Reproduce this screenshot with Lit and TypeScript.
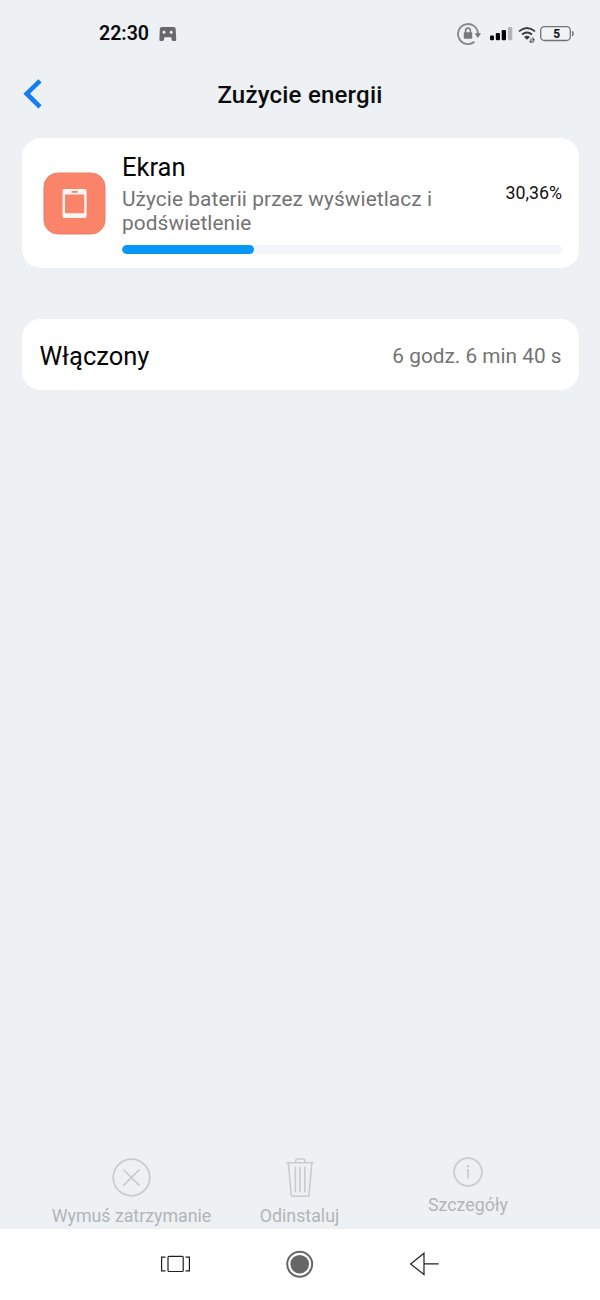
import { LitElement, html, css, svg } from "lit";
import { customElement, property } from "lit/decorators.js";

@customElement("status-bar")
class StatusBar extends LitElement {
  static styles = css`
    :host { display: flex; height: 68px; align-items: center; justify-content: space-between; padding: 0 26px 0 99px; box-sizing: border-box; }
    .left, .right { display: flex; align-items: center; }
    .time { width: 50px; font-size: 19.6px; font-weight: 600; line-height: 22px; letter-spacing: -0.02px; color: #0b0b0c; margin-right: 10px; white-space: nowrap; }
    svg { display: block; }
  `;
  render() {
    return html`
      <div class="left">
        <span class="time">22:30</span>
        <svg width="18" height="16" viewBox="0 0 18 16">
          <path fill="#69696b" fill-rule="evenodd" d="M2.8 1H14.6Q16.6 1 16.7 3L17.2 13.4Q17.2 14.9 16 14.9H14Q12.8 14.9 12.6 13.6L12.2 11.2H5.4L5 13.6Q4.8 14.9 3.6 14.9H1.6Q.4 14.9 .4 13.4L.8 3Q.9 1 2.8 1ZM5 4.3L3.2 6.3L5 8.3L6.8 6.3ZM12.2 4.3L10.4 6.3L12.2 8.3L14 6.3Z"/>
        </svg>
      </div>
      <div class="right">
        <svg width="117" height="26" viewBox="457 21 117 26">
          <path d="M478 34A10 10 0 1 0 474.4 41.7" fill="none" stroke="#858688" stroke-width="1.8"/>
          <path d="M465.6 33V30.8A2.2 2.6 0 0 1 470.4 30.8V33" fill="none" stroke="#77787a" stroke-width="1.6"/>
          <rect x="463.8" y="32.3" width="8.4" height="6.4" rx="0.8" fill="#77787a"/>
          <path d="M474.6 33.3H481L477.8 38Z" fill="#77787a"/>
          <rect x="490" y="35.5" width="4" height="4.8" rx="1.2" fill="#050505"/>
          <rect x="495.8" y="33" width="4.2" height="7.3" rx="1.2" fill="#050505"/>
          <rect x="501.7" y="30" width="4.3" height="10.3" rx="1.2" fill="#050505"/>
          <rect x="508" y="27" width="4.3" height="13.3" rx="1.2" fill="#b2b4b6"/>
          <g fill="none" stroke="#3c3d3f" stroke-width="1.9">
            <path d="M519 31.4Q527 24.6 535 31.4"/>
            <path d="M522 34.6Q527 30.4 532 34.6"/>
          </g>
          <path d="M524 36.9Q527 34.8 530 36.9L527 39.8Z" fill="#3c3d3f"/>
          <path d="M531 38.4V43M529.5 41L531 43M533 43V38.4L534.6 40.4" fill="none" stroke="#55565a" stroke-width="1.1"/>
          <rect x="540.7" y="26.7" width="29.6" height="13.8" rx="3.8" fill="#f1f4f6" stroke="#707173" stroke-width="1.3"/>
          <path d="M572.4 31.3Q573.6 33.7 572.4 36" fill="none" stroke="#707173" stroke-width="1.5"/>
          <text x="556.6" y="38" text-anchor="middle" font-size="12" font-weight="700" fill="#111">5</text>
        </svg>
      </div>`;
  }
}

@customElement("usage-card")
class UsageCard extends LitElement {
  @property({ type: Number }) percent = 30;
  static styles = css`
    :host { display: flex; box-sizing: border-box; height: 130px; border-radius: 19px; background: #fff; padding: 13px 17px 0 21.5px; }
    .tile { width: 63px; height: 63px; margin: 21px 16px 0 0; flex: none; }
    .tile svg { display: block; }
    .body { flex: 1; }
    .name { font-size: 25.5px; line-height: 32px; color: #050505; }
    .row { display: flex; justify-content: space-between; }
    .desc { width: 330px; margin-top: 4px; font-size: 20.8px; line-height: 24px; color: #737373; letter-spacing: 0.1px; }
    .value { font-size: 17.8px; line-height: 20px; color: #111; }
    .track { height: 9px; border-radius: 5px; background: #f3f5fa; margin-top: 10px; overflow: hidden; }
    .fill { height: 100%; border-radius: 5px; background: #0897f7; }
  `;
  render() {
    return html`
      <div class="tile">
        <svg width="63" height="63" viewBox="0 0 63 63">
          <rect x="0.9" y="0.9" width="61.2" height="61.2" rx="14" fill="#fa8469" stroke="#e57d66" stroke-width="0.8"/>
          <path fill="#fff6f0" fill-rule="evenodd" d="M21 17H42Q43.6 17 43.6 19V44Q43.6 46 42 46H21Q19.6 46 19.6 44V19Q19.6 17 21 17ZM22 22.4V41.2H41.2V22.4ZM28.5 19V20.8H34.8V19Z"/>
        </svg>
      </div>
      <div class="body">
        <div class="name">Ekran</div>
        <div class="row">
          <div class="desc">Użycie baterii przez wyświetlacz i podświetlenie</div>
          <div class="value">30,36%</div>
        </div>
        <div class="track"><div class="fill" style="width:${this.percent}%"></div></div>
      </div>`;
  }
}

@customElement("app-root")
class AppRoot extends LitElement {
  static styles = css`
    :host { display: flex; flex-direction: column; height: 1300px; background: #edf1f4; font-family: Roboto, sans-serif; overflow: hidden; }
    svg { display: block; }
    .header { display: grid; grid-template-columns: 60px 1fr 60px; height: 54px; align-items: center; }
    .back { padding-left: 23px; }
    .title { text-align: center; font-size: 24px; font-weight: 500; line-height: 30px; letter-spacing: 0.22px; color: #0c0c0d; }
    .content { flex: 1; padding: 16px 21px 0 21.5px; }
    .time-card { display: flex; box-sizing: border-box; height: 70.5px; margin-top: 51px; padding: 3px 17.5px 0 18px; border-radius: 19px; background: #fff; align-items: center; justify-content: space-between; }
    .label { font-size: 25.5px; color: #050505; }
    .duration { font-size: 20.8px; color: #737373; }
    .actions { display: grid; grid-template-columns: 168px 168px 169px; padding-left: 47.5px; height: 72px; }
    .action { display: flex; flex-direction: column; align-items: center; font-size: 17.8px; line-height: 22px; color: #b2b5b8; white-space: nowrap; }
    .action svg { margin-bottom: 7px; }
    .details svg { margin-bottom: 4px; }
    .nav { display: flex; height: 71px; background: #fff; }
  `;
  render() {
    const line = "#c9cbce";
    const cross = svg`<g fill="none" stroke=${line} stroke-width="1.7"><circle cx="19.5" cy="20.5" r="18.3"/><path d="M11.3 12.5L27.5 28.7M27.5 12.5L11.3 28.7"/></g>`;
    return html`
      <status-bar></status-bar>
      <div class="header">
        <div class="back">
          <svg width="20" height="32" viewBox="0 0 20 32"><path d="M17 1.8L3.7 14.7L17 27.8" fill="none" stroke="#147df0" stroke-width="4.6"/></svg>
        </div>
        <div class="title">Zużycie energii</div>
      </div>
      <div class="content">
        <usage-card .percent=${30}></usage-card>
        <div class="time-card">
          <span class="label">Włączony</span>
          <span class="duration">6 godz. 6 min 40 s</span>
        </div>
      </div>
      <div class="actions">
        <div class="action"><svg width="40" height="41">${cross}</svg>Wymuś zatrzymanie</div>
        <div class="action">
          <svg width="40" height="41" viewBox="0 0 40 41"><g fill="none" stroke=${line} stroke-width="1.6" stroke-linejoin="round"><path d="M6.6 5.8H33.4M15.7 5.8V3L16.7 2H23.8L24.8 3V5.8M8.3 5.8L11.2 37.8Q11.3 39.3 12.8 39.3H27.4Q28.8 39.3 29 37.8L31.8 5.8M15.3 9.8V35.2M20 9.8V35.2M24.8 9.8V35.2"/></g></svg>
          Odinstaluj
        </div>
        <div class="action details">
          <svg width="32" height="33" viewBox="0 0 32 33"><g fill="none" stroke=${line} stroke-width="1.7"><circle cx="16" cy="15" r="13.9"/><path d="M16.2 12.3V21.8M14.8 12.8H16.2"/></g><circle cx="16.2" cy="9.3" r="1.2" fill=${line}/></svg>
          Szczegóły
        </div>
      </div>
      <div class="nav">
        <svg width="600" height="71" viewBox="0 1229 600 71">
          <g fill="none" stroke="#202020" stroke-width="1.2">
            <path d="M165.5 1257.2H161.6V1270.8H165.5M185.5 1257.2H189.4V1270.8H185.5"/>
            <rect x="168" y="1256.3" width="15.2" height="15.2" rx="1"/>
            <path d="M424 1253.3L410.6 1264L424 1274.5ZM424 1263.8H438.7"/>
          </g>
          <circle cx="299.7" cy="1264.2" r="12.5" fill="none" stroke="#666" stroke-width="2"/>
          <circle cx="299.7" cy="1264.2" r="9.3" fill="#666"/>
        </svg>
      </div>`;
  }
}
